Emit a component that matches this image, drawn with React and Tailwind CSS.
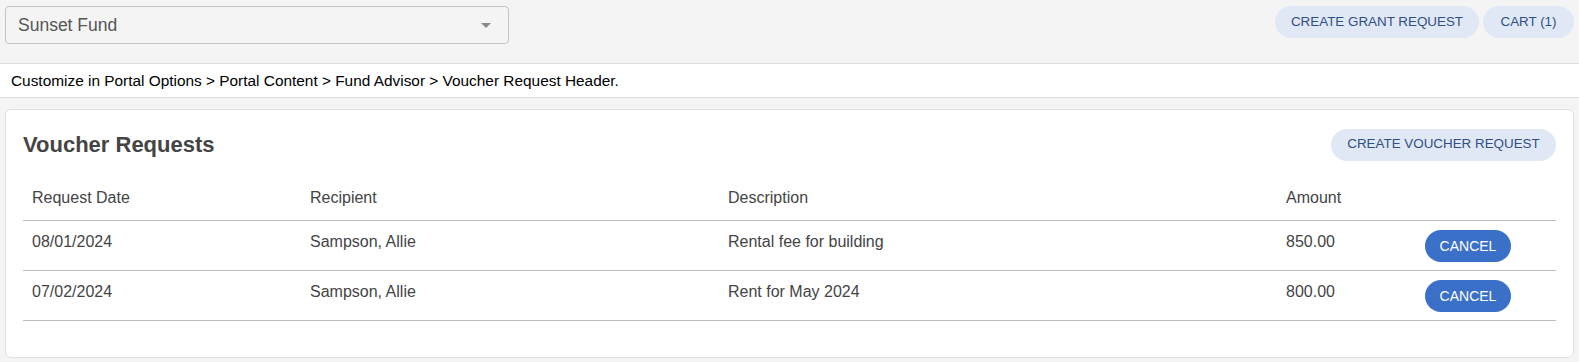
import React from 'react';

const ROWS = [
    { date: '08/01/2024', recipient: 'Sampson, Allie', description: 'Rental fee for building', amount: '850.00' },
    { date: '07/02/2024', recipient: 'Sampson, Allie', description: 'Rent for May 2024', amount: '800.00' },
];

const COLS = 'grid grid-cols-[278px_418px_558px_139px_139px]';

function PillButton({ children, className = '' }) {
    return (
        <button className={`h-8 rounded-full bg-[#e1e8f5] text-[13.4px] uppercase text-[#2f4f86] ${className}`}>
            {children}
        </button>
    );
}

export default function App() {
    return (
        <div className="min-h-[362px] bg-[#f4f4f4] pt-[6px] text-[#444] font-['Liberation_Sans',Arial,sans-serif]">
            <div className="flex justify-between px-[5px]">
                <div className="flex h-[38px] w-[504px] items-center justify-between rounded border border-[#c4c4c4] bg-[#f4f4f4] pl-3 pr-[17px]">
                    <span className="text-[17.5px] text-[#555]">Sunset Fund</span>
                    <span className="h-0 w-0 border-x-[5px] border-t-[5px] border-x-transparent border-t-[#8a8a8a]"></span>
                </div>
                <div className="flex gap-1">
                    <PillButton className="w-[204px]">Create Grant Request</PillButton>
                    <PillButton className="w-[91px]">Cart (1)</PillButton>
                </div>
            </div>

            <div className="mt-[19px] flex h-[35px] items-center border-y border-[#dcdcdc] bg-white px-[11px] text-[15.4px] text-black">
                Customize in Portal Options &gt; Portal Content &gt; Fund Advisor &gt; Voucher Request Header.
            </div>

            <div className="mx-[5px] mt-[11px] h-[249px] rounded-md border border-[#e0e0e0] bg-white px-[17px] pt-[18px]">
                <div className="flex items-center justify-between">
                    <h2 className="text-[22px] font-bold text-[#444]">Voucher Requests</h2>
                    <PillButton className="w-[225px]">Create Voucher Request</PillButton>
                </div>

                <div className="mt-[14px] text-[16px]">
                    <div className={`${COLS} h-[46px] items-center border-b border-[#bdbdbd]`}>
                        <div className="pl-[9px]">Request Date</div>
                        <div className="pl-[9px]">Recipient</div>
                        <div className="pl-[9px]">Description</div>
                        <div className="pl-[9px]">Amount</div>
                        <div></div>
                    </div>
                    {ROWS.map((row, i) => (
                        <div key={i} className={`${COLS} h-[50px] items-start border-b border-[#bdbdbd] pt-[9px]`}>
                            <div className="pl-[9px] pt-[2px] leading-[20px]">{row.date}</div>
                            <div className="pl-[9px] pt-[2px] leading-[20px]">{row.recipient}</div>
                            <div className="pl-[9px] pt-[2px] leading-[20px]">{row.description}</div>
                            <div className="pl-[9px] pt-[2px] leading-[20px]">{row.amount}</div>
                            <div className="pl-[9px]">
                                <button className="h-8 w-[86px] rounded-full bg-[#3b70c9] text-[14px] uppercase text-white">
                                    Cancel
                                </button>
                            </div>
                        </div>
                    ))}
                </div>
            </div>
        </div>
    );
}
